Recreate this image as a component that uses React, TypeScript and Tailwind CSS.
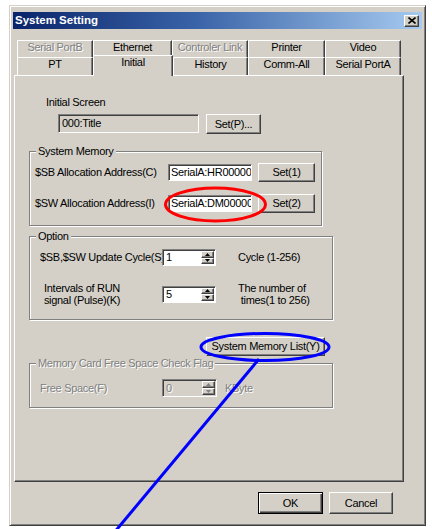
const raised =
  "border border-t-white border-l-white border-r-[#404040] border-b-[#404040] shadow-[inset_-1px_-1px_#808080] bg-[#d4d0c8]";
const sunken =
  "border border-t-[#808080] border-l-[#808080] border-r-white border-b-white shadow-[inset_1px_1px_#404040]";
const etched = "border border-[#808080] shadow-[inset_1px_1px_#fff,1px_1px_#fff]";
const greyText = "text-[#808080] [text-shadow:1px_1px_0_#fff]";

const topTabs = [
  { label: "Serial PortB", w: "w-[76px]", off: true },
  { label: "Ethernet", w: "w-[79px]" },
  { label: "Controler Link", w: "w-[76px]", off: true },
  { label: "Printer", w: "w-[77px]" },
  { label: "Video", w: "w-[76px]" },
];

const lowTabs = [
  { label: "PT", w: "w-[76px]" },
  { label: "Initial", w: "w-[80px]", on: true },
  { label: "History", w: "w-[75px]" },
  { label: "Comm-All", w: "w-[77px]" },
  { label: "Serial PortA", w: "w-[76px]" },
];

const tabEdge =
  "border-t border-l border-r border-t-white border-l-white border-r-[#404040] shadow-[inset_-1px_0_#808080] bg-[#d4d0c8] flex justify-center leading-[13px]";

function Button({ label, className }: { label: string; className: string }) {
  return (
    <div className={`${raised} ${className} flex items-center justify-center leading-[13px]`}>{label}</div>
  );
}

function Group({ title, className, off, children }: { title: string; className: string; off?: boolean; children: React.ReactNode }) {
  return (
    <div className={`${etched} relative ${className}`}>
      <span className={`absolute -top-[7px] left-[6px] px-[2px] bg-[#d4d0c8] leading-[13px] ${off ? greyText : ""}`}>
        {title}
      </span>
      {children}
    </div>
  );
}

function Arrow({ up, off }: { up?: boolean; off?: boolean }) {
  return (
    <svg width="5" height="3" viewBox="0 0 5 3">
      <path d={up ? "M2.5 0 L5 3 L0 3 Z" : "M0 0 L5 0 L2.5 3 Z"} fill={off ? "#808080" : "#000"} />
    </svg>
  );
}

function Spin({ value, className, off }: { value: string; className: string; off?: boolean }) {
  return (
    <div className={`${sunken} ${className} flex ${off ? "bg-[#d4d0c8]" : "bg-white"}`}>
      <div className={`flex-1 pl-[3px] flex items-center ${off ? greyText : ""}`}>{value}</div>
      <div className="flex flex-col w-[13px] my-[1px] mr-[1px]">
        <div className={`${raised} flex-1 flex items-center justify-center`}>
          <Arrow up off={off} />
        </div>
        <div className={`${raised} flex-1 flex items-center justify-center`}>
          <Arrow off={off} />
        </div>
      </div>
    </div>
  );
}

export default function App() {
  return (
    <div className="relative w-[432px] h-[529px] bg-white overflow-hidden pl-[9px] pt-[5px] font-['Liberation_Sans',Arial,sans-serif] text-[11px] tracking-[-0.3px] text-black">
      <div className="w-[417px] h-[521px] bg-[#d4d0c8] border border-t-[#d4d0c8] border-l-[#d4d0c8] border-r-[#404040] border-b-[#404040] shadow-[inset_1px_1px_#fff,inset_-1px_-1px_#808080] pt-[6px] px-[3px]">
        {/* title bar */}
        <div className="h-[17px] flex items-center justify-between pl-[2px] pr-[3px] bg-[linear-gradient(to_right,#0a246a,#3a64a8_45%,#a6caf0)]">
          <span className="text-white font-bold text-[11.5px] tracking-normal">System Setting</span>
          <div className={`${raised} w-[15px] h-[12px] flex items-center justify-center`}>
            <svg width="8" height="7" viewBox="0 0 8 7">
              <path d="M0.5 0.5 L7.5 6.5 M7.5 0.5 L0.5 6.5" stroke="#000" strokeWidth="1.6" />
            </svg>
          </div>
        </div>

        {/* tabs */}
        <div className="mt-[11px] ml-[4px]">
          <div className="flex h-[17px]">
            {topTabs.map((t) => (
              <div key={t.label} className={`${tabEdge} ${t.w} h-full ${t.off ? greyText : ""}`}>
                {t.label}
              </div>
            ))}
          </div>
          <div className="flex h-[18px] items-start">
            {lowTabs.map((t) =>
              t.on ? (
                <div key={t.label} className={`${tabEdge} ${t.w} relative z-10 -mt-[2px] h-[21px]`}>
                  {t.label}
                </div>
              ) : (
                <div key={t.label} className={`${tabEdge} ${t.w} h-[18px]`}>
                  {t.label}
                </div>
              )
            )}
          </div>
        </div>

        {/* panel */}
        <div className="ml-[1px] w-[390px] h-[407px] border border-t-white border-l-white border-r-[#404040] border-b-[#404040] shadow-[inset_-1px_-1px_#808080] flex flex-col items-start">
          <div className="mt-[20px] ml-[31px] leading-[13px]">Initial Screen</div>
          <div className="mt-[5px] ml-[43px] flex items-start h-[20px]">
            <div className={`${sunken} w-[141px] h-[19px] pl-[3px] flex items-center`}>000:Title</div>
            <Button label="Set(P)..." className="ml-[7px] w-[55px] h-[20px]" />
          </div>

          <Group title="System Memory" className="mt-[17px] ml-[14px] w-[293px] h-[75px] pt-[11px] pl-[5px]">
            <div className="flex items-center h-[19px]">
              <div className="w-[133px] whitespace-nowrap">$SB Allocation Address(C)</div>
              <div className={`${sunken} bg-white w-[84px] h-[17px] pl-[2px] flex items-center overflow-hidden whitespace-nowrap`}>
                SerialA:HR00000
              </div>
              <Button label="Set(1)" className="ml-[6px] w-[57px] h-[19px]" />
            </div>
            <div className="flex items-center h-[19px] mt-[12px]">
              <div className="w-[133px] whitespace-nowrap">$SW Allocation Address(I)</div>
              <div className={`${sunken} bg-white w-[84px] h-[17px] pl-[2px] flex items-center overflow-hidden whitespace-nowrap`}>
                SerialA:DM00000
              </div>
              <Button label="Set(2)" className="ml-[6px] w-[57px] h-[19px]" />
            </div>
          </Group>

          <Group title="Option" className="mt-[10px] ml-[14px] w-[304px] h-[84px] pt-[12px] pl-[10px]">
            <div className="flex items-center h-[17px]">
              <div className="w-[122px] overflow-hidden whitespace-nowrap">$SB,$SW Update Cycle(S)</div>
              <Spin value="1" className="w-[54px] h-[17px]" />
              <div className="ml-[22px]">Cycle (1-256)</div>
            </div>
            <div className="flex items-center h-[26px] mt-[15px]">
              <div className="w-[122px]">
                <div className="w-[84px] text-center leading-[12px] whitespace-nowrap">
                  Intervals of RUN
                  <br />
                  signal (Pulse)(K)
                </div>
              </div>
              <Spin value="5" className="w-[54px] h-[17px]" />
              <div className="ml-[22px] leading-[12px] whitespace-nowrap">
                The number of
                <br />
                &nbsp;times(1 to 256)
              </div>
            </div>
          </Group>

          <Button label="System Memory List(Y)" className="mt-[17px] ml-[191px] w-[119px] h-[19px]" />

          <Group title="Memory Card Free Space Check Flag" off className="mt-[7px] ml-[14px] w-[304px] h-[45px] pt-[15px] pl-[10px]">
            <div className="flex items-center h-[18px]">
              <div className={`w-[122px] ${greyText}`}>Free Space(F)</div>
              <Spin value="0" off className="w-[55px] h-[18px]" />
              <div className={`ml-[8px] ${greyText}`}>KByte</div>
            </div>
          </Group>
        </div>

        {/* dialog buttons */}
        <div className="mt-[10px] ml-[245px] flex">
          <div className="w-[65px] h-[22px] border border-black bg-[#d4d0c8] shadow-[inset_1px_1px_#fff,inset_-1px_-1px_#404040,inset_-2px_-2px_#808080] flex items-center justify-center">
            OK
          </div>
          <Button label="Cancel" className="ml-[6px] w-[64px] h-[22px]" />
        </div>
      </div>

      {/* annotations */}
      <svg className="absolute inset-0 pointer-events-none" width="432" height="529" viewBox="0 0 432 529">
        <ellipse cx="215.5" cy="204.5" rx="50" ry="16.5" fill="none" stroke="#ff0000" strokeWidth="3" />
        <ellipse cx="265" cy="347" rx="64" ry="13.5" fill="none" stroke="#0000ff" strokeWidth="3" />
        <line x1="259" y1="359" x2="113" y2="534" stroke="#0000ff" strokeWidth="3" />
      </svg>
    </div>
  );
}
